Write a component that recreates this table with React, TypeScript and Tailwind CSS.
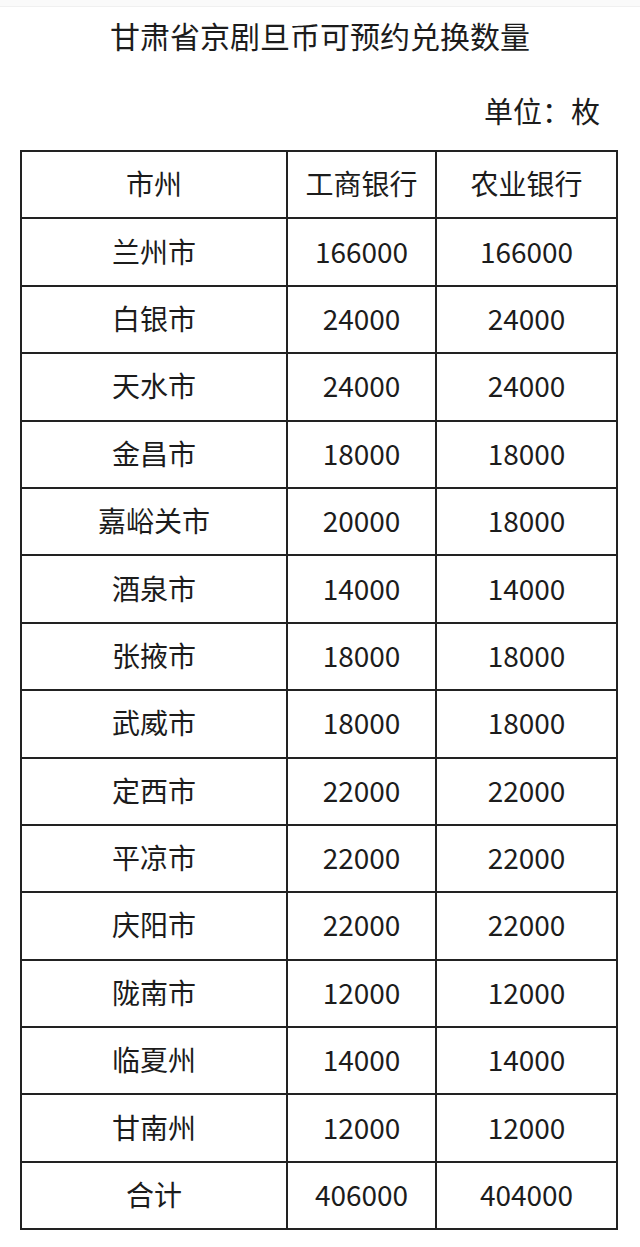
import React from "react";

const rows: [string, string, string][] = [
  ["兰州市", "166000", "166000"],
  ["白银市", "24000", "24000"],
  ["天水市", "24000", "24000"],
  ["金昌市", "18000", "18000"],
  ["嘉峪关市", "20000", "18000"],
  ["酒泉市", "14000", "14000"],
  ["张掖市", "18000", "18000"],
  ["武威市", "18000", "18000"],
  ["定西市", "22000", "22000"],
  ["平凉市", "22000", "22000"],
  ["庆阳市", "22000", "22000"],
  ["陇南市", "12000", "12000"],
  ["临夏州", "14000", "14000"],
  ["甘南州", "12000", "12000"],
  ["合计", "406000", "404000"],
];

const cell = "border-2 border-[#222] text-center text-[28px] leading-none pb-[3px]";

export default function App() {
  const font = { fontFamily: '"Noto Sans CJK SC", "Noto Sans", sans-serif' };
  return (
    <div className="w-[640px] h-[1247px] bg-white text-[#1c1c1c] relative" style={font}>
      <div className="h-[7px] bg-[#fafafa] border-b border-[#f0f0f0]" />
      <div className="h-[60px] flex items-center justify-center text-[30px] leading-none pb-[5px]">
        甘肃省京剧旦币可预约兑换数量
      </div>
      <div className="h-[83px] flex items-center justify-end pr-[40px] text-[29px] leading-none pt-[3px]">
        单位：枚
      </div>
      <div className="ml-[20px] w-[596px]">
        <table className="w-full border-collapse border-2 border-[#222] table-fixed">
          <colgroup>
            <col className="w-[266px]" />
            <col className="w-[149px]" />
            <col className="w-[181px]" />
          </colgroup>
          <tbody>
            <tr className="h-[67.4px]">
              <td className={cell}>市州</td>
              <td className={cell}>工商银行</td>
              <td className={cell}>农业银行</td>
            </tr>
            {rows.map((r) => (
              <tr key={r[0]} className="h-[67.4px]">
                <td className={cell}>{r[0]}</td>
                <td className={cell}>{r[1]}</td>
                <td className={cell}>{r[2]}</td>
              </tr>
            ))}
          </tbody>
        </table>
      </div>
    </div>
  );
}
